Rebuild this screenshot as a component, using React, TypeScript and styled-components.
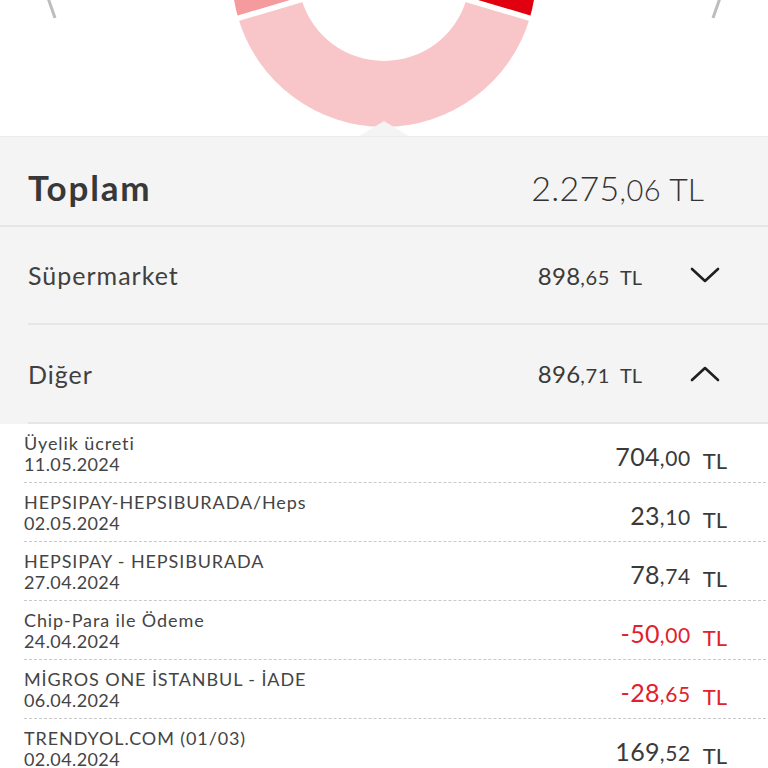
import styled, {createGlobalStyle} from 'styled-components';

const GlobalStyle = createGlobalStyle`
	html, body {
		margin: 0;
		padding: 0;
		background: #ffffff;
	}
	body {
		font-family: Lato, 'Open Sans', sans-serif;
		color: #3a3a3a;
	}
`;

type Tone = 'pos' | 'neg';

const transactions: {title: string; date: string; whole: string; frac: string; tone: Tone}[] = [
	{title: 'Üyelik ücreti', date: '11.05.2024', whole: '704', frac: ',00', tone: 'pos'},
	{title: 'HEPSIPAY-HEPSIBURADA/Heps', date: '02.05.2024', whole: '23', frac: ',10', tone: 'pos'},
	{title: 'HEPSIPAY - HEPSIBURADA', date: '27.04.2024', whole: '78', frac: ',74', tone: 'pos'},
	{title: 'Chip-Para ile Ödeme', date: '24.04.2024', whole: '-50', frac: ',00', tone: 'neg'},
	{title: 'MİGROS ONE İSTANBUL - İADE', date: '06.04.2024', whole: '-28', frac: ',65', tone: 'neg'},
	{title: 'TRENDYOL.COM (01/03)', date: '02.04.2024', whole: '169', frac: ',52', tone: 'pos'},
];

// donut geometry (center sits above the visible area)
const CX = 384;
const CY = -25;
const R_OUT = 152;
const R_IN = 86;

const pt = (r: number, deg: number) => {
	const a = (deg * Math.PI) / 180;
	return [CX + r * Math.cos(a), CY + r * Math.sin(a)];
};

const sector = (from: number, to: number) => {
	const [x1, y1] = pt(R_OUT, from);
	const [x2, y2] = pt(R_OUT, to);
	const [x3, y3] = pt(R_IN, to);
	const [x4, y4] = pt(R_IN, from);
	const large = to - from > 180 ? 1 : 0;
	return `M${x1} ${y1} A${R_OUT} ${R_OUT} 0 ${large} 1 ${x2} ${y2} L${x3} ${y3} A${R_IN} ${R_IN} 0 ${large} 0 ${x4} ${y4} Z`;
};

const gapLine = (deg: number) => {
	const [x1, y1] = pt(R_IN - 4, deg);
	const [x2, y2] = pt(R_OUT + 4, deg);
	return {x1, y1, x2, y2};
};

const Donut = () => {
	const g1 = gapLine(16.5);
	const g2 = gapLine(163.5);
	return (
		<svg width='768' height='136' viewBox='0 0 768 136'>
			<line x1='48' y1='-2' x2='55' y2='18' stroke='#bdbdbd' strokeWidth='3' />
			<line x1='720' y1='-2' x2='713' y2='18' stroke='#bdbdbd' strokeWidth='3' />
			<path d={sector(16.5, 163.5)} fill='#f8c6c8' />
			<path d={sector(163.5, 230)} fill='#f59a9d' />
			<path d={sector(-50, 16.5)} fill='#e1000f' />
			<line {...g1} stroke='#ffffff' strokeWidth='5.5' />
			<line {...g2} stroke='#ffffff' strokeWidth='5.5' />
			<polygon points='358,137 384,121 410,137' fill='#f4f4f4' />
		</svg>
	);
};

const Chevron = ({up}: {up?: boolean}) => (
	<svg width='30' height='18' viewBox='0 0 30 18'>
		<polyline
			points={up ? '2,15 15,3 28,15' : '2,3 15,15 28,3'}
			fill='none'
			stroke='#1f1f1f'
			strokeWidth='2.6'
			strokeLinecap='round'
			strokeLinejoin='round'
		/>
	</svg>
);

const App = () => {
	return (
		<Page>
			<GlobalStyle />
			<ChartArea>
				<Donut />
			</ChartArea>
			<Summary>
				<TotalRow>
					<TotalLabel>Toplam</TotalLabel>
					<TotalMoney>
						<Whole $size={34}>2.275</Whole>
						<Frac $size={29}>,06</Frac>
						<Cur $size={32} $gap={8} $drop={0}>TL</Cur>
					</TotalMoney>
				</TotalRow>
				<CategoryRow>
					<CategoryLabel>Süpermarket</CategoryLabel>
					<CategoryRight>
						<Money>
							<Whole $size={24}>898</Whole>
							<Frac $size={20}>,65</Frac>
							<Cur $size={20} $gap={10} $drop={0}>TL</Cur>
						</Money>
						<Chevron />
					</CategoryRight>
				</CategoryRow>
				<CategoryRow>
					<CategoryLabel>Diğer</CategoryLabel>
					<CategoryRight>
						<Money>
							<Whole $size={24}>896</Whole>
							<Frac $size={20}>,71</Frac>
							<Cur $size={20} $gap={10} $drop={0}>TL</Cur>
						</Money>
						<Chevron up />
					</CategoryRight>
				</CategoryRow>
			</Summary>
			<TxList>
				{transactions.map((t) => (
					<TxRow key={t.title + t.date}>
						<TxInfo>
							<TxTitle>{t.title}</TxTitle>
							<TxDate>{t.date}</TxDate>
						</TxInfo>
						<TxAmount $tone={t.tone}>
							<Whole $size={25}>{t.whole}</Whole>
							<Frac $size={21}>{t.frac}</Frac>
							<Cur $size={22} $gap={12} $drop={3}>TL</Cur>
						</TxAmount>
					</TxRow>
				))}
			</TxList>
		</Page>
	);
};

const Page = styled.div`
	width: 768px;
	height: 768px;
	overflow: hidden;
	background: #ffffff;
`;

const ChartArea = styled.div`
	height: 136px;
	overflow: hidden;
	& svg {
		display: block;
	}
`;

const Summary = styled.div`
	background: #f4f4f4;
	border-top: 1px solid #ececec;
`;

const TotalRow = styled.div`
	height: 90px;
	display: flex;
	align-items: center;
	justify-content: space-between;
	padding: 12px 64px 0 28px;
	box-sizing: border-box;
	border-bottom: 2px solid #e6e6e6;
`;

const TotalLabel = styled.div`
	font-size: 35px;
	font-weight: 700;
	color: #383838;
	letter-spacing: 1.8px;
`;

const Money = styled.div`
	display: flex;
	align-items: baseline;
	color: #3a3a3a;
	font-weight: 400;
`;

const TotalMoney = styled(Money)`
	font-weight: 300;
	color: #333333;
`;

const Whole = styled.span<{$size: number}>`
	font-size: ${(p) => p.$size}px;
	letter-spacing: 0.3px;
`;

const Frac = styled.span<{$size: number}>`
	font-size: ${(p) => p.$size}px;
	letter-spacing: 0.6px;
`;

const Cur = styled.span<{$size: number; $gap: number; $drop: number}>`
	font-size: ${(p) => p.$size}px;
	margin-left: ${(p) => p.$gap}px;
	position: relative;
	top: ${(p) => p.$drop}px;
`;

const CategoryRow = styled.div`
	height: 96px;
	margin-left: 28px;
	padding-right: 48px;
	display: flex;
	align-items: center;
	justify-content: space-between;
	border-bottom: 2px solid #e6e6e6;
	&:last-child {
		height: 97px;
	}
`;

const CategoryLabel = styled.div`
	font-size: 25px;
	color: #404040;
	letter-spacing: 1px;
`;

const CategoryRight = styled.div`
	display: flex;
	align-items: center;
	gap: 48px;
	& svg {
		display: block;
	}
`;

const TxList = styled.div`
	padding: 0 2px 0 24px;
`;

const TxRow = styled.div`
	height: 59px;
	box-sizing: border-box;
	display: flex;
	align-items: center;
	justify-content: space-between;
	padding-right: 39px;
	border-bottom: 1px dashed #c9c9c9;
`;

const TxInfo = styled.div`
	display: flex;
	flex-direction: column;
	padding-top: 1px;
`;

const TxTitle = styled.div`
	font-size: 18px;
	line-height: 21px;
	color: #444444;
	letter-spacing: 0.9px;
`;

const TxDate = styled.div`
	font-size: 18px;
	line-height: 21px;
	color: #444444;
	letter-spacing: 0.4px;
`;

const TxAmount = styled(Money)<{$tone: Tone}>`
	padding-top: 6px;
	color: ${(p) => (p.$tone === 'neg' ? '#e3202b' : '#3a3a3a')};
`;

export default App;
